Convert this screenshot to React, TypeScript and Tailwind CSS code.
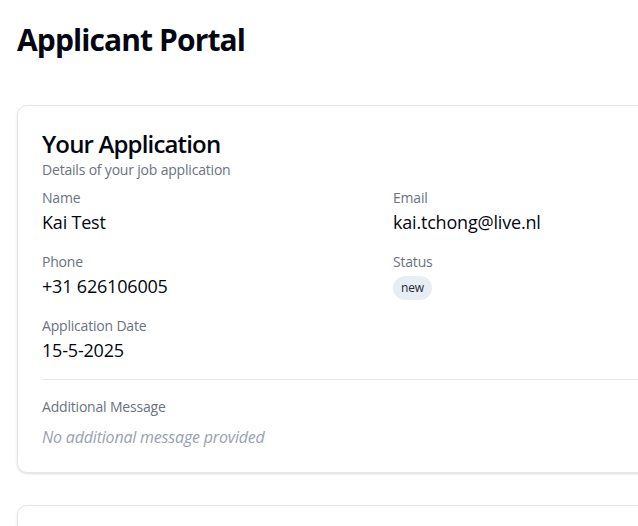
const font = { fontFamily: '"Open Sans", "Noto Sans", sans-serif' };

type FieldProps = {
  label: string;
  children: React.ReactNode;
};

function Field({ label, children }: FieldProps) {
  return (
    <div>
      <p className="text-sm leading-5 text-gray-500">{label}</p>
      {children}
    </div>
  );
}

export default function App() {
  return (
    <div
      className="min-h-screen bg-white px-[17px] pt-[22px] pb-10 tracking-[-0.012em] text-gray-950"
      style={font}
    >
      <h1 className="text-3xl leading-9 font-bold tracking-[-0.03em]">Applicant Portal</h1>

      <div className="mt-[47px] flex w-[736px] flex-col gap-8">
        {/* ── Application card ─────────────────────────────────────────── */}
        <section className="rounded-[10px] border border-gray-200 bg-white px-6 pt-[22px] pb-[23px] shadow-sm">
          <h2 className="text-2xl leading-8 font-semibold tracking-[-0.035em]">Your Application</h2>
          <p className="text-sm leading-5 text-gray-500">Details of your job application</p>

          <div className="mt-2 grid grid-cols-2 gap-x-4 gap-y-4">
            <Field label="Name">
              <p className="text-lg leading-7">Kai Test</p>
            </Field>
            <Field label="Email">
              <p className="text-lg leading-7">kai.tchong@live.nl</p>
            </Field>
            <Field label="Phone">
              <p className="text-lg leading-7">+31 626106005</p>
            </Field>
            <Field label="Status">
              <span className="mt-1 inline-block rounded-full bg-slate-200/80 px-2 py-1 text-xs leading-4 text-gray-800">
                new
              </span>
            </Field>
            <Field label="Application Date">
              <p className="text-lg leading-7">15-5-2025</p>
            </Field>
          </div>

          <hr className="mt-[15px] mb-[17px] border-gray-200" />

          <Field label="Additional Message">
            <p className="mt-2 text-base leading-6 text-gray-400 italic">No additional message provided</p>
          </Field>
        </section>

        {/* ── Next card ────────────────────────────────────────────────── */}
        <section className="h-40 rounded-[10px] border border-gray-200 bg-white shadow-sm" />
      </div>
    </div>
  );
}
